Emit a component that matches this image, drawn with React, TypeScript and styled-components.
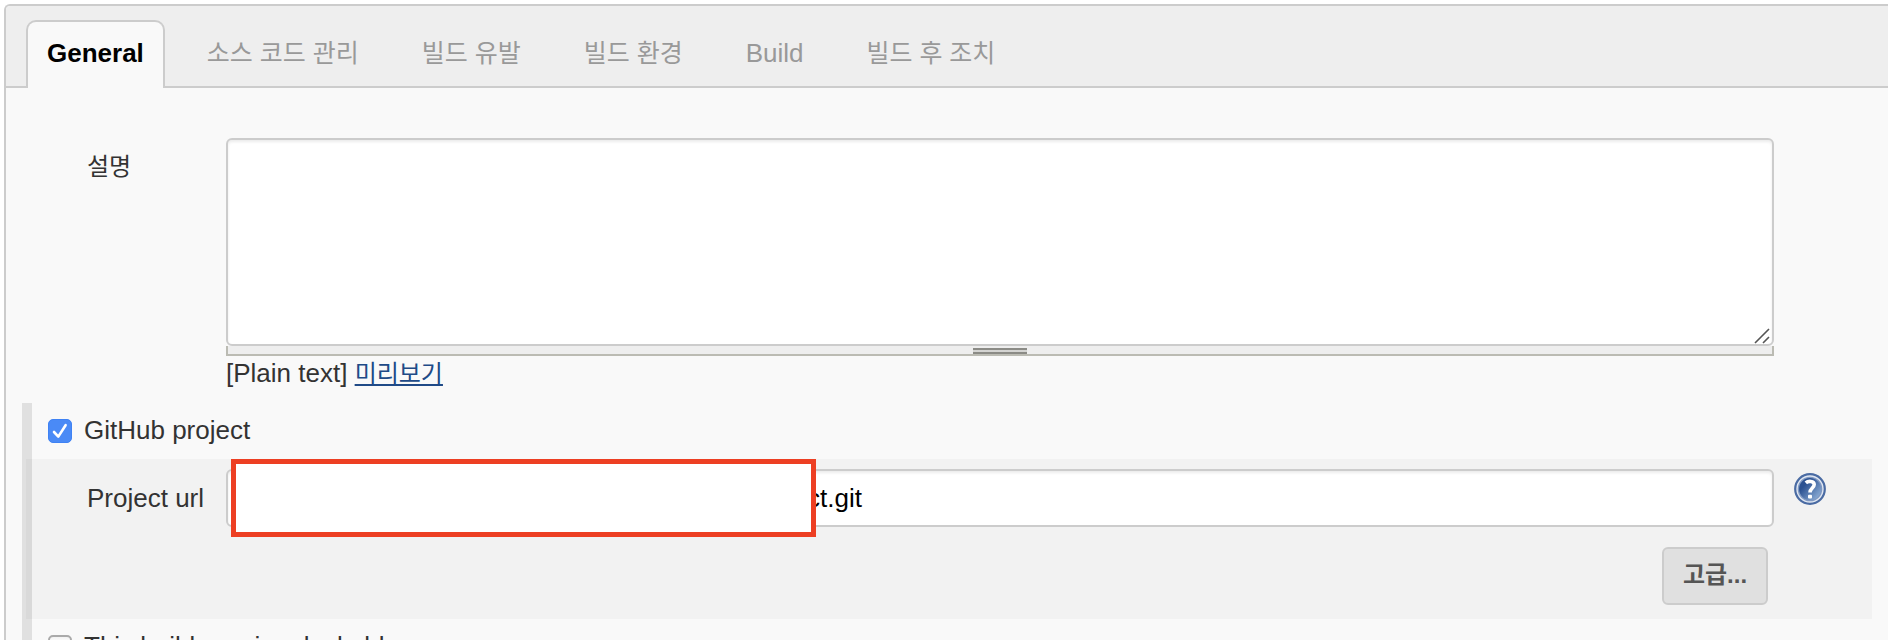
import React from 'react';
import styled, { createGlobalStyle } from 'styled-components';

const GlobalStyle = createGlobalStyle`
  * { box-sizing: border-box; }
  body {
    margin: 0;
    background: #fff;
    color: #333;
    font: 26px/30px "Liberation Sans", "Noto Sans CJK KR", sans-serif;
  }
`;

const Page = styled.main`
  display: flex;
  height: 100vh;
  padding: 4px 0 0 4px;
  overflow-y: auto;
  scrollbar-width: none;
`;

const Panel = styled.form`
  flex: 1;
  height: max-content;
  min-height: 100%;
  border: 2px solid #ccc;
  border-width: 2px 0 0 2px;
  border-top-left-radius: 6px;
  background: #f9f9f9;
`;

const TabBar = styled.nav`
  display: flex;
  gap: 21px;
  padding: 14px 20px 0;
  border-bottom: 2px solid #ccc;
  border-top-left-radius: 4px;
  background: #eee;
`;

const Tab = styled.button<{ $active?: boolean; $korean?: boolean }>`
  height: 68px;
  margin-bottom: -2px;
  padding: 0 19px 4px;
  border: 2px solid ${(p) => (p.$active ? '#ccc' : 'transparent')};
  border-bottom: 0;
  border-radius: 10px 10px 0 0;
  background: ${(p) => (p.$active ? '#f9f9f9' : 'transparent')};
  color: ${(p) => (p.$active ? '#000' : '#999')};
  font-family: inherit;
  font-size: ${(p) => (p.$korean ? 25 : 26)}px;
  font-weight: ${(p) => (p.$active ? 700 : 400)};
  line-height: 30px;
  white-space: nowrap;
`;

const Content = styled.div`
  padding: 50px 16px 0;
`;

const FieldRow = styled.div<{ $inset?: boolean }>`
  display: grid;
  grid-template-columns: 139px 1fr 98px;
  padding-left: ${(p) => (p.$inset ? 61 : 65)}px;
`;

const FieldLabel = styled.label<{ $korean?: boolean }>`
  padding-top: 14px;
  font-size: ${(p) => (p.$korean ? 24 : 26)}px;
`;

const Field = styled.div`
  position: relative;
  min-width: 0;
`;

const fieldBox = `
  display: block;
  width: 100%;
  border: 2px solid #ccc;
  border-radius: 6px;
  outline: 0;
  background: #fff;
  box-shadow: inset 0 2px 3px rgba(0, 0, 0, 0.08);
  color: #000;
  font: inherit;
`;

const TextArea = styled.textarea`
  ${fieldBox}
  height: 208px;
  padding: 10px;
  resize: none;
`;

const ResizeCorner = styled.svg`
  position: absolute;
  right: 4px;
  top: 190px;
  pointer-events: none;
`;

const DragBar = styled.div`
  display: flex;
  justify-content: center;
  height: 10px;
  padding-top: 2px;
  border: 2px solid #bbbbb3;
  border-top: 0;
  background: #eee;
`;

const Grip = styled.span`
  width: 54px;
  height: 6px;
  border: solid #8b8b86;
  border-width: 2px 0;
  background: #d4d4d2;
`;

const Hint = styled.div`
  padding-top: 2px;
`;

const PreviewLink = styled.a`
  color: #204a87;
  font-size: 24px;
  text-decoration: underline;
  text-decoration-thickness: 2px;
  text-underline-offset: 2px;
  text-decoration-skip-ink: none;
`;

const OptionGroup = styled.section`
  margin-top: 14px;
  border-left: 10px solid #e0e0e0;
`;

const OptionLabel = styled.label`
  display: flex;
  gap: 12px;
  padding: 12px 16px 14px;
`;

const CheckBox = styled.input`
  appearance: none;
  flex: none;
  display: grid;
  place-items: center;
  width: 24px;
  height: 24px;
  margin: 4px 0 0;
  border: 2px solid #aaa;
  border-radius: 5px;
  background: linear-gradient(#f2f2f2, #fff 5px);

  &:checked {
    border: 1px solid #3f82f4;
    background: #4a8af6;
  }
`;

const CheckWrap = styled.span`
  position: relative;
  height: 30px;
`;

const CheckMark = styled.svg`
  position: absolute;
  left: 0;
  top: 4px;
  pointer-events: none;
`;

const OptionBody = styled.div`
  margin-left: -6px;
  padding: 10px 0 14px;
  background: rgba(0, 0, 0, 0.027);
`;

const UrlInput = styled.input`
  ${fieldBox}
  height: 58px;
  padding: 0 10px 0 579px;
`;

const Redaction = styled.span`
  position: absolute;
  left: 5px;
  top: -10px;
  width: 585px;
  height: 78px;
  border: 5px solid #ed3f23;
  background: #fff;
`;

const HelpButton = styled.button`
  width: 32px;
  height: 32px;
  margin: 4px 0 0 20px;
  padding: 0;
  border: 0;
  background: none;
`;

const Actions = styled.div`
  display: flex;
  justify-content: flex-end;
  margin-top: 20px;
  padding-right: 104px;
`;

const ActionButton = styled.button`
  width: 106px;
  height: 58px;
  padding: 0 0 2px;
  border: 2px solid #ccc;
  border-radius: 6px;
  background: #e0e0e0;
  color: #555;
  font-family: inherit;
  font-size: 24px;
  font-weight: 700;
  line-height: 30px;
`;

const tabs = [
  { name: 'General', korean: false },
  { name: '소스 코드 관리', korean: true },
  { name: '빌드 유발', korean: true },
  { name: '빌드 환경', korean: true },
  { name: 'Build', korean: false },
  { name: '빌드 후 조치', korean: true },
];

function HelpIcon() {
  return (
    <svg width="32" height="32" viewBox="0 0 32 32" aria-hidden="true" display="block">
      <defs>
        <linearGradient id="helpFill" x1="0.1" y1="0.2" x2="0.9" y2="0.9">
          <stop offset="0.2" stopColor="#2b5191" />
          <stop offset="1" stopColor="#8fb0d8" />
        </linearGradient>
      </defs>
      <circle cx="16" cy="16" r="14.8" fill="#dfe6f1" stroke="#4a6ba3" strokeWidth="2.2" />
      <circle cx="16" cy="16" r="11.6" fill="url(#helpFill)" stroke="#7f98c2" strokeWidth="1.4" />
      <path
        d="M11.8 9.8C14 7.8 20.2 7.6 20.2 11.6C20.2 15 16 15.2 16 19.6"
        fill="none"
        stroke="#fff"
        strokeWidth="3.6"
      />
      <rect x="14" y="21.8" width="4" height="3.8" rx="1" fill="#fff" />
    </svg>
  );
}

function Option({ label, checked }: { label: string; checked?: boolean }) {
  return (
    <OptionLabel>
      <CheckWrap>
        <CheckBox type="checkbox" defaultChecked={checked} />
        {checked && (
          <CheckMark width="24" height="24" viewBox="0 0 24 24" aria-hidden="true">
            <path
              d="M6 13L10.3 17.6L17.6 6.2"
              fill="none"
              stroke="#fff"
              strokeWidth="2.6"
              strokeLinecap="round"
              strokeLinejoin="round"
            />
          </CheckMark>
        )}
      </CheckWrap>
      {label}
    </OptionLabel>
  );
}

export default function App() {
  return (
    <Page>
      <GlobalStyle />
      <Panel>
        <TabBar>
          {tabs.map((tab, i) => (
            <Tab key={tab.name} type="button" $active={i === 0} $korean={tab.korean}>
              {tab.name}
            </Tab>
          ))}
        </TabBar>
        <Content>
          <FieldRow>
            <FieldLabel htmlFor="description" $korean>
              설명
            </FieldLabel>
            <Field>
              <TextArea id="description" />
              <ResizeCorner width="16" height="16" viewBox="0 0 16 16" aria-hidden="true">
                <path d="M1 15L15 1M9 15L15 9" stroke="#555" strokeWidth="1.6" />
              </ResizeCorner>
              <DragBar>
                <Grip />
              </DragBar>
              <Hint>
                [Plain text] <PreviewLink href="#preview">미리보기</PreviewLink>
              </Hint>
            </Field>
          </FieldRow>
          <OptionGroup>
            <Option label="GitHub project" checked />
            <OptionBody>
              <FieldRow $inset>
                <FieldLabel htmlFor="project-url">Project url</FieldLabel>
                <Field>
                  <UrlInput id="project-url" type="text" defaultValue="ct.git" />
                  <Redaction />
                </Field>
                <HelpButton type="button" aria-label="Help">
                  <HelpIcon />
                </HelpButton>
              </FieldRow>
              <Actions>
                <ActionButton type="button">고급...</ActionButton>
              </Actions>
            </OptionBody>
            <Option label="This build requires lockable resources" />
          </OptionGroup>
        </Content>
      </Panel>
    </Page>
  );
}
